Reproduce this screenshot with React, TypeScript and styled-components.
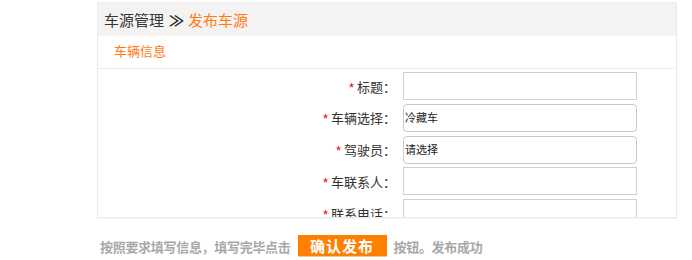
import React from "react";
import styled, { createGlobalStyle } from "styled-components";

const GlobalStyle = createGlobalStyle`
  body {
    margin: 0;
    background: #fff;
    font-family: "Liberation Sans", "Noto Sans CJK SC", sans-serif;
  }
`;

const Page = styled.div`
  padding: 2px 0 0 97px;
`;

const Panel = styled.div`
  width: 578px;
  height: 214px;
  border: 1px solid #ececec;
  overflow: hidden;
  box-shadow: 0 1px 1px rgba(0, 0, 0, 0.04);
`;

const Header = styled.div`
  height: 33px;
  line-height: 33px;
  background: #f4f3f1;
  padding-left: 6px;
  font-size: 15px;
  color: #333;
  span {
    color: #ff7a12;
  }
`;

const Chevrons = styled.i`
  font-style: normal;
  font-weight: bold;
  display: inline-block;
  margin: 0 4px 0 5px;
  font-family: "Noto Sans CJK SC", sans-serif;
  font-size: 15px;
  color: #222;
`;

const SectionTitle = styled.div`
  height: 32px;
  line-height: 32px;
  padding-left: 16px;
  font-size: 13px;
  color: #ff7a12;
  border-bottom: 1px solid #eee;
`;

const Form = styled.div`
  display: flex;
  flex-direction: column;
  gap: 3.75px;
  padding-top: 3px;
`;

const Row = styled.div`
  display: grid;
  grid-template-columns: 298px 234px;
  column-gap: 7px;
  align-items: center;
`;

const Label = styled.label`
  text-align: right;
  font-size: 13px;
  color: #333;
  em {
    font-style: normal;
    color: #e60012;
    margin-right: 3px;
  }
`;

const Field = styled.div<{ $rounded?: boolean }>`
  height: 26px;
  border: 1px solid ${(p) => (p.$rounded ? "#c9c9c9" : "#cfcfcf")};
  border-radius: ${(p) => (p.$rounded ? "4px" : "0")};
  font-size: 11px;
  line-height: 26px;
  color: #222;
  padding-left: 1px;
  background: #fff;
`;

const Footer = styled.div`
  display: flex;
  align-items: center;
  gap: 7px;
  margin: 17px 0 0 3px;
  font-size: 13px;
  font-weight: bold;
  color: #a8a8a8;
  letter-spacing: -0.3px;
`;

const PublishButton = styled.button`
  width: 89px;
  height: 22px;
  border: none;
  border-bottom: 1px solid #ffc48a;
  background: #ff7f00;
  color: #fff;
  font-size: 15px;
  font-weight: bold;
  font-family: inherit;
  padding: 0;
  letter-spacing: 1px;
`;

const fields = [
  { label: "标题", value: "", rounded: false },
  { label: "车辆选择", value: "冷藏车", rounded: true },
  { label: "驾驶员", value: "请选择", rounded: true },
  { label: "车联系人", value: "", rounded: false },
  { label: "联系电话", value: "", rounded: false },
];

export default function App() {
  return (
    <>
      <GlobalStyle />
      <Page>
        <Panel>
          <Header>
            车源管理<Chevrons>≫</Chevrons>
            <span>发布车源</span>
          </Header>
          <SectionTitle>车辆信息</SectionTitle>
          <Form>
            {fields.map((f) => (
              <Row key={f.label}>
                <Label>
                  <em>*</em>
                  {f.label}：
                </Label>
                <Field $rounded={f.rounded}>{f.value}</Field>
              </Row>
            ))}
          </Form>
        </Panel>
        <Footer>
          按照要求填写信息，填写完毕点击
          <PublishButton>确认发布</PublishButton>
          按钮。发布成功
        </Footer>
      </Page>
    </>
  );
}
